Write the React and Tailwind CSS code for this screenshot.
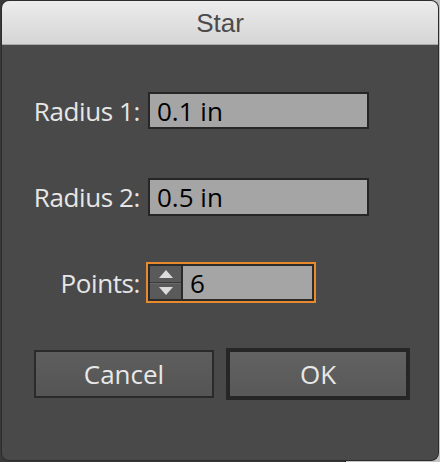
export default function App() {
    const label = "w-[138px] text-right text-[26px] font-medium leading-none text-[#e6e6e6] tracking-[-0.4px]";
    const font = { fontFamily: '"Open Sans", "Liberation Sans", sans-serif' };

    return (
        <div className="relative h-[462px] w-[440px] overflow-hidden bg-[linear-gradient(to_right,#393939_345px,#111_345px,#111_346px,#c4c4c4_346px)]">
            {/* dialog window */}
            <div className="absolute left-[2px] top-[1px] flex h-[459px] w-[436px] flex-col overflow-hidden rounded-[7px] bg-[#494949] shadow-[0_0_0_1px_#2c2c2c]">
                {/* title bar */}
                <div className="flex h-[44px] items-center justify-center border-b border-[#a9a9a9] bg-[linear-gradient(#ececec,#d5d5d5)]">
                    <span className="text-[26px] leading-none text-[#4b4b4b]" style={{ fontFamily: '"Liberation Sans", Arial, sans-serif' }}>Star</span>
                </div>

                <div className="flex flex-col" style={font}>
                    {/* Radius 1 */}
                    <div className="mt-[47px] flex items-center">
                        <span className={label}>Radius 1:</span>
                        <div className="ml-[8px] flex h-[37px] w-[221px] items-center border-2 border-[#262626] bg-[#a5a5a5] pl-[7px] text-[26px] leading-none text-black">
                            0.1 in
                        </div>
                    </div>

                    {/* Radius 2 */}
                    <div className="mt-[49px] flex items-center">
                        <span className={label}>Radius 2:</span>
                        <div className="ml-[8px] flex h-[38px] w-[221px] items-center border-2 border-[#262626] bg-[#a5a5a5] pl-[7px] text-[26px] leading-none text-black">
                            0.5 in
                        </div>
                    </div>

                    {/* Points */}
                    <div className="mt-[46px] flex items-center">
                        <span className={label}>Points:</span>
                        <div className="ml-[6px] h-[41px] w-[170px] border-2 border-[#e8892e]">
                            <div className="flex h-full w-full border-2 border-[#2b2b2b] bg-[#a5a5a5]">
                                <div className="flex w-[33px] flex-col border-r-2 border-[#2b2b2b] bg-[#5a5a5a]">
                                    <div className="flex flex-1 items-center justify-center border-b border-[#3a3a3a]">
                                        <svg width="14" height="8" viewBox="0 0 14 8"><path d="M7 0 L14 8 L0 8 Z" fill="#dcdcdc" /></svg>
                                    </div>
                                    <div className="flex flex-1 items-center justify-center border-t border-[#6a6a6a]">
                                        <svg width="14" height="8" viewBox="0 0 14 8"><path d="M0 0 L14 0 L7 8 Z" fill="#dcdcdc" /></svg>
                                    </div>
                                </div>
                                <div className="flex items-center pl-[7px] text-[26px] leading-none text-black">6</div>
                            </div>
                        </div>
                    </div>

                    {/* buttons */}
                    <div className="mt-[45px] flex items-center pl-[32px]">
                        <button className="flex h-[48px] w-[180px] items-center justify-center border-2 border-[#2a2a2a] bg-[linear-gradient(#5e5e5e,#545454)] text-[26px] font-medium leading-none text-[#e8e8e8]">
                            Cancel
                        </button>
                        <button className="ml-[12px] flex h-[52px] w-[184px] items-center justify-center border-4 border-[#262626] bg-[linear-gradient(#626262,#585858)] text-[26px] font-medium leading-none text-[#e8e8e8]">
                            OK
                        </button>
                    </div>
                </div>
            </div>
        </div>
    );
}
